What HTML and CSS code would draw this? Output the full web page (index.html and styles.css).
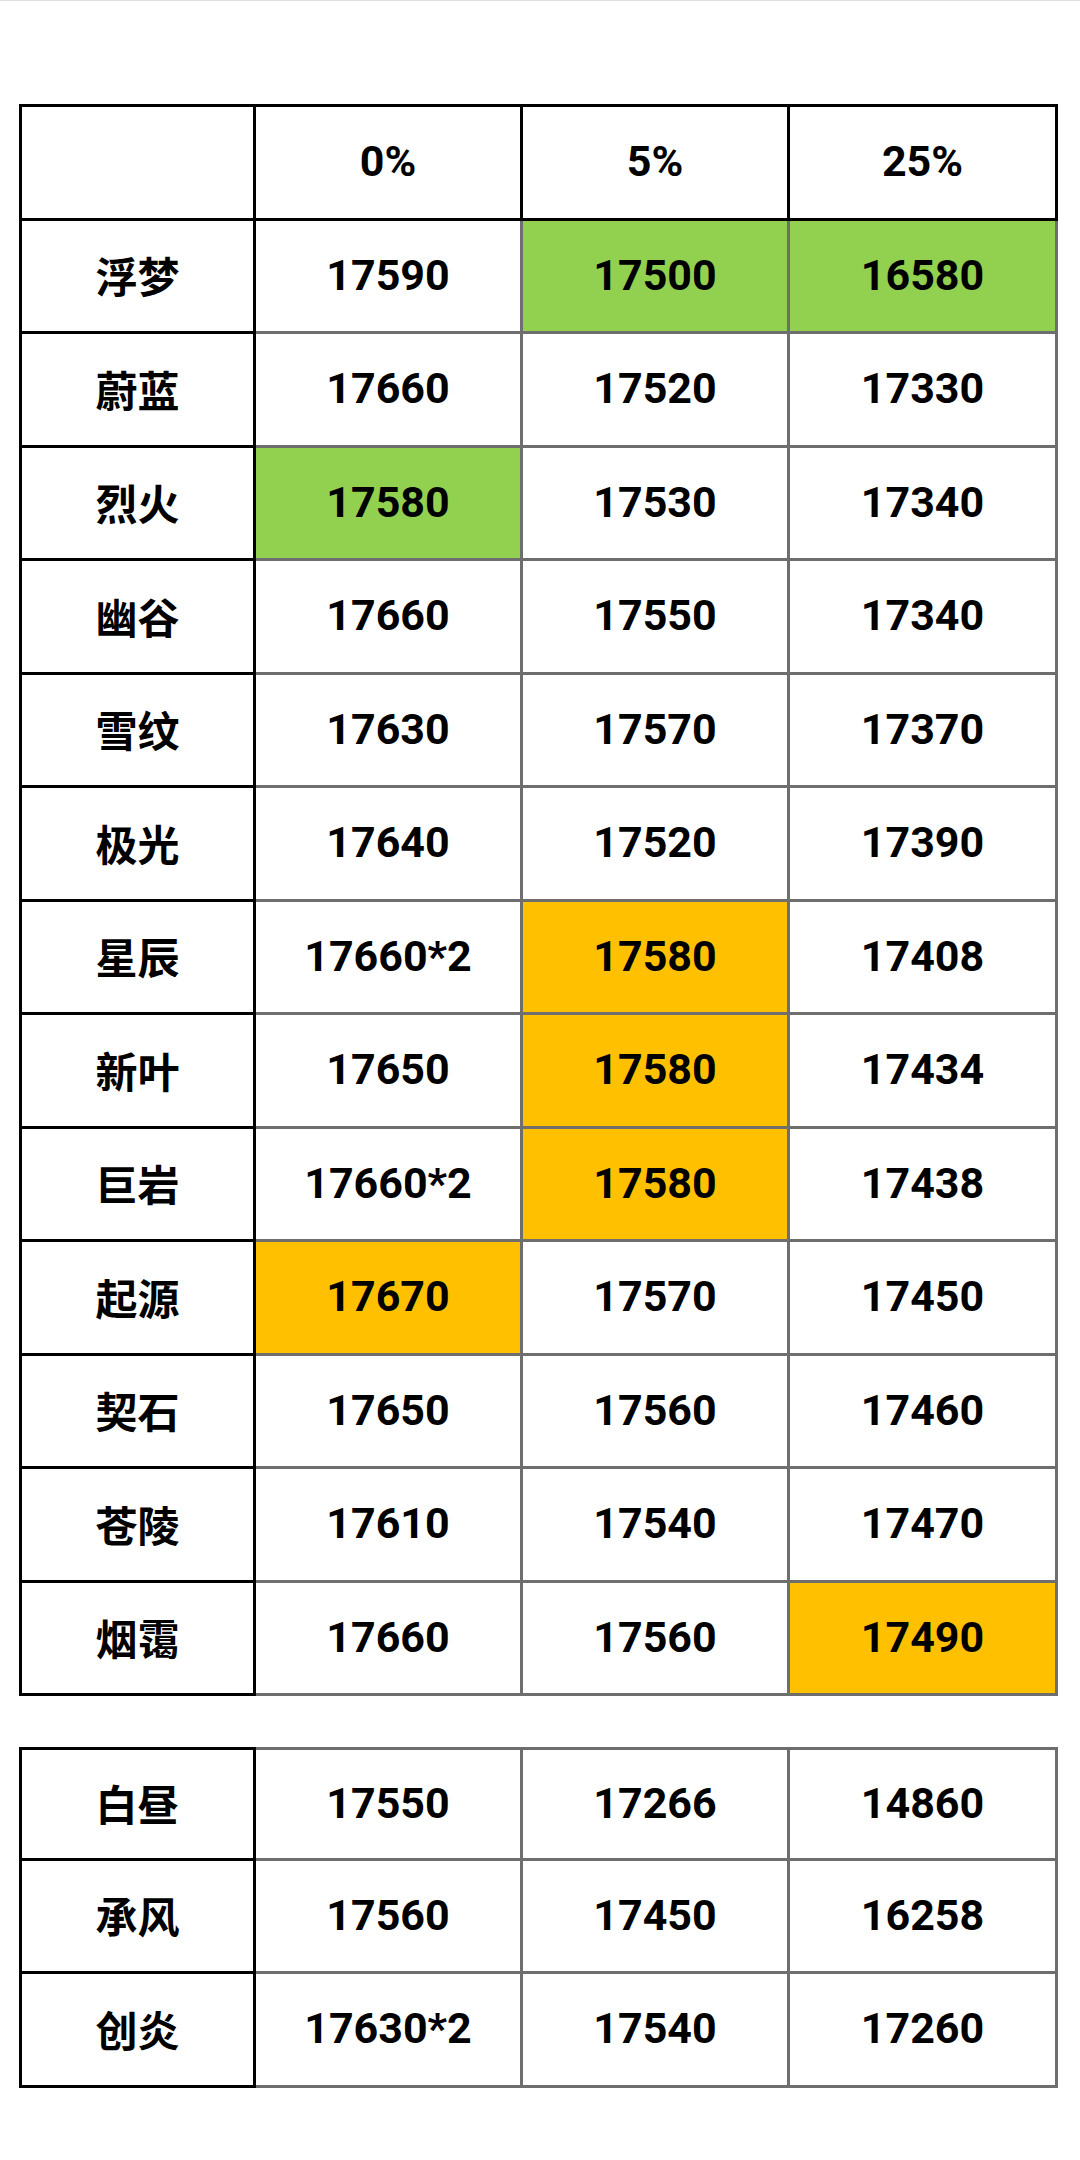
FILE: index.html
```html
<!DOCTYPE html>
<html lang="zh">
<head>
<meta charset="utf-8">
<title>Table</title>
<link rel="stylesheet" href="styles.css">
</head>
<body>
<div class="page">
  <div class="grid grid-main">
    <div class="cell head"></div>
    <div class="cell head">0%</div>
    <div class="cell head">5%</div>
    <div class="cell head">25%</div>

    <div class="cell name">浮梦</div>
    <div class="cell">17590</div>
    <div class="cell green">17500</div>
    <div class="cell green">16580</div>

    <div class="cell name">蔚蓝</div>
    <div class="cell">17660</div>
    <div class="cell">17520</div>
    <div class="cell">17330</div>

    <div class="cell name">烈火</div>
    <div class="cell green">17580</div>
    <div class="cell">17530</div>
    <div class="cell">17340</div>

    <div class="cell name">幽谷</div>
    <div class="cell">17660</div>
    <div class="cell">17550</div>
    <div class="cell">17340</div>

    <div class="cell name">雪纹</div>
    <div class="cell">17630</div>
    <div class="cell">17570</div>
    <div class="cell">17370</div>

    <div class="cell name">极光</div>
    <div class="cell">17640</div>
    <div class="cell">17520</div>
    <div class="cell">17390</div>

    <div class="cell name">星辰</div>
    <div class="cell">17660*2</div>
    <div class="cell gold">17580</div>
    <div class="cell">17408</div>

    <div class="cell name">新叶</div>
    <div class="cell">17650</div>
    <div class="cell gold">17580</div>
    <div class="cell">17434</div>

    <div class="cell name">巨岩</div>
    <div class="cell">17660*2</div>
    <div class="cell gold">17580</div>
    <div class="cell">17438</div>

    <div class="cell name">起源</div>
    <div class="cell gold">17670</div>
    <div class="cell">17570</div>
    <div class="cell">17450</div>

    <div class="cell name">契石</div>
    <div class="cell">17650</div>
    <div class="cell">17560</div>
    <div class="cell">17460</div>

    <div class="cell name">苍陵</div>
    <div class="cell">17610</div>
    <div class="cell">17540</div>
    <div class="cell">17470</div>

    <div class="cell name">烟霭</div>
    <div class="cell">17660</div>
    <div class="cell">17560</div>
    <div class="cell gold">17490</div>
  </div>

  <div class="grid grid-extra">
    <div class="cell name top">白昼</div>
    <div class="cell top">17550</div>
    <div class="cell top">17266</div>
    <div class="cell top">14860</div>

    <div class="cell name">承风</div>
    <div class="cell">17560</div>
    <div class="cell">17450</div>
    <div class="cell">16258</div>

    <div class="cell name">创炎</div>
    <div class="cell">17630*2</div>
    <div class="cell">17540</div>
    <div class="cell">17260</div>
  </div>
</div>
</body>
</html>
```

FILE: styles.css
```css
html, body {
  margin: 0;
  padding: 0;
  background: #ffffff;
}

body {
  border-top: 1px solid #e0e0e0;
  font-family: Roboto, "Noto Sans CJK SC", sans-serif;
  font-weight: 700;
  color: #000;
}

.page {
  padding: 103px 0 0 19px;
}

.grid {
  display: grid;
  grid-template-columns: 234px 267px 267px 268px;
  grid-auto-rows: 113.5px;
  width: 1039px;
  border-left: 3px solid #000;
  box-sizing: border-box;
}

.grid-main {
  border-top: 3px solid #000;
}

.grid-extra {
  margin-top: 51px;
  grid-auto-rows: 113.5px;
}

.cell {
  display: flex;
  align-items: center;
  justify-content: center;
  box-sizing: border-box;
  border-right: 3px solid #6e6e6e;
  border-bottom: 3px solid #6e6e6e;
  font-size: 43px;
  line-height: 1;
  padding-bottom: 1px;
}

.head,
.name {
  border-right-color: #000;
  border-bottom-color: #000;
}

.name {
  font-family: "Noto Sans CJK SC", sans-serif;
  font-size: 42px;
}

.top {
  border-top: 3px solid #6e6e6e;
}

.name.top {
  border-top-color: #000;
}

.green {
  background: #92d050;
}

.gold {
  background: #ffc000;
}
```
